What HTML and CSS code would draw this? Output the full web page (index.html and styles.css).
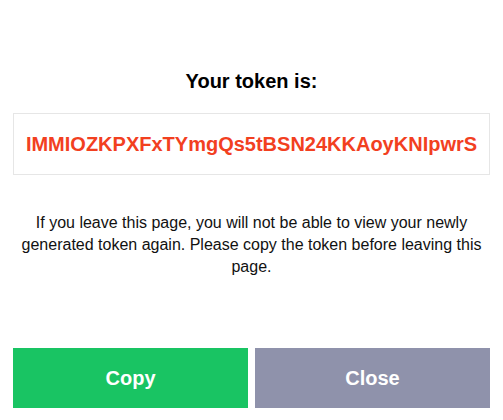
FILE: index.html
```html
<!DOCTYPE html>
<html lang="en">
<head>
<meta charset="utf-8">
<link rel="stylesheet" href="styles.css">
</head>
<body>
<main class="dialog">
  <h2 class="title">Your token is:</h2>
  <div class="token-box"><span class="token">IMMIOZKPXFxTYmgQs5tBSN24KKAoyKNIpwrS</span></div>
  <p class="note">If you leave this page, you will not be able to view your newly generated token again. Please copy the token before leaving this page.</p>
  <div class="actions">
    <button class="btn btn-copy">Copy</button>
    <button class="btn btn-close">Close</button>
  </div>
</main>
</body>
</html>
```
FILE: styles.css
```css
html, body {
  margin: 0;
  padding: 0;
  background: #fff;
}
body {
  font-family: "Liberation Sans", Arial, sans-serif;
  color: #111;
}
.dialog {
  padding: 69px 13px 0;
  display: flex;
  flex-direction: column;
}
.title {
  margin: 0;
  font-size: 20px;
  line-height: 24px;
  font-weight: bold;
  text-align: center;
  color: #000;
}
.token-box {
  margin-top: 20px;
  height: 60px;
  border: 1px solid #e6e6e6;
  display: flex;
  align-items: center;
  justify-content: center;
}
.token {
  font-size: 20px;
  font-weight: bold;
  color: #f2401f;
}
.note {
  margin: 37px 0 0;
  padding: 0 8px;
  font-size: 16px;
  line-height: 22px;
  text-align: center;
}
.actions {
  margin-top: 70px;
  display: flex;
  gap: 7px;
}
.btn {
  flex: 1;
  height: 60px;
  border: 0;
  border-radius: 0;
  font-family: "Liberation Sans", Arial, sans-serif;
  font-size: 20px;
  font-weight: bold;
  color: #fff;
  padding: 0;
}
.btn-copy { background: #19c463; }
.btn-close { background: #8f92ab; }
```
